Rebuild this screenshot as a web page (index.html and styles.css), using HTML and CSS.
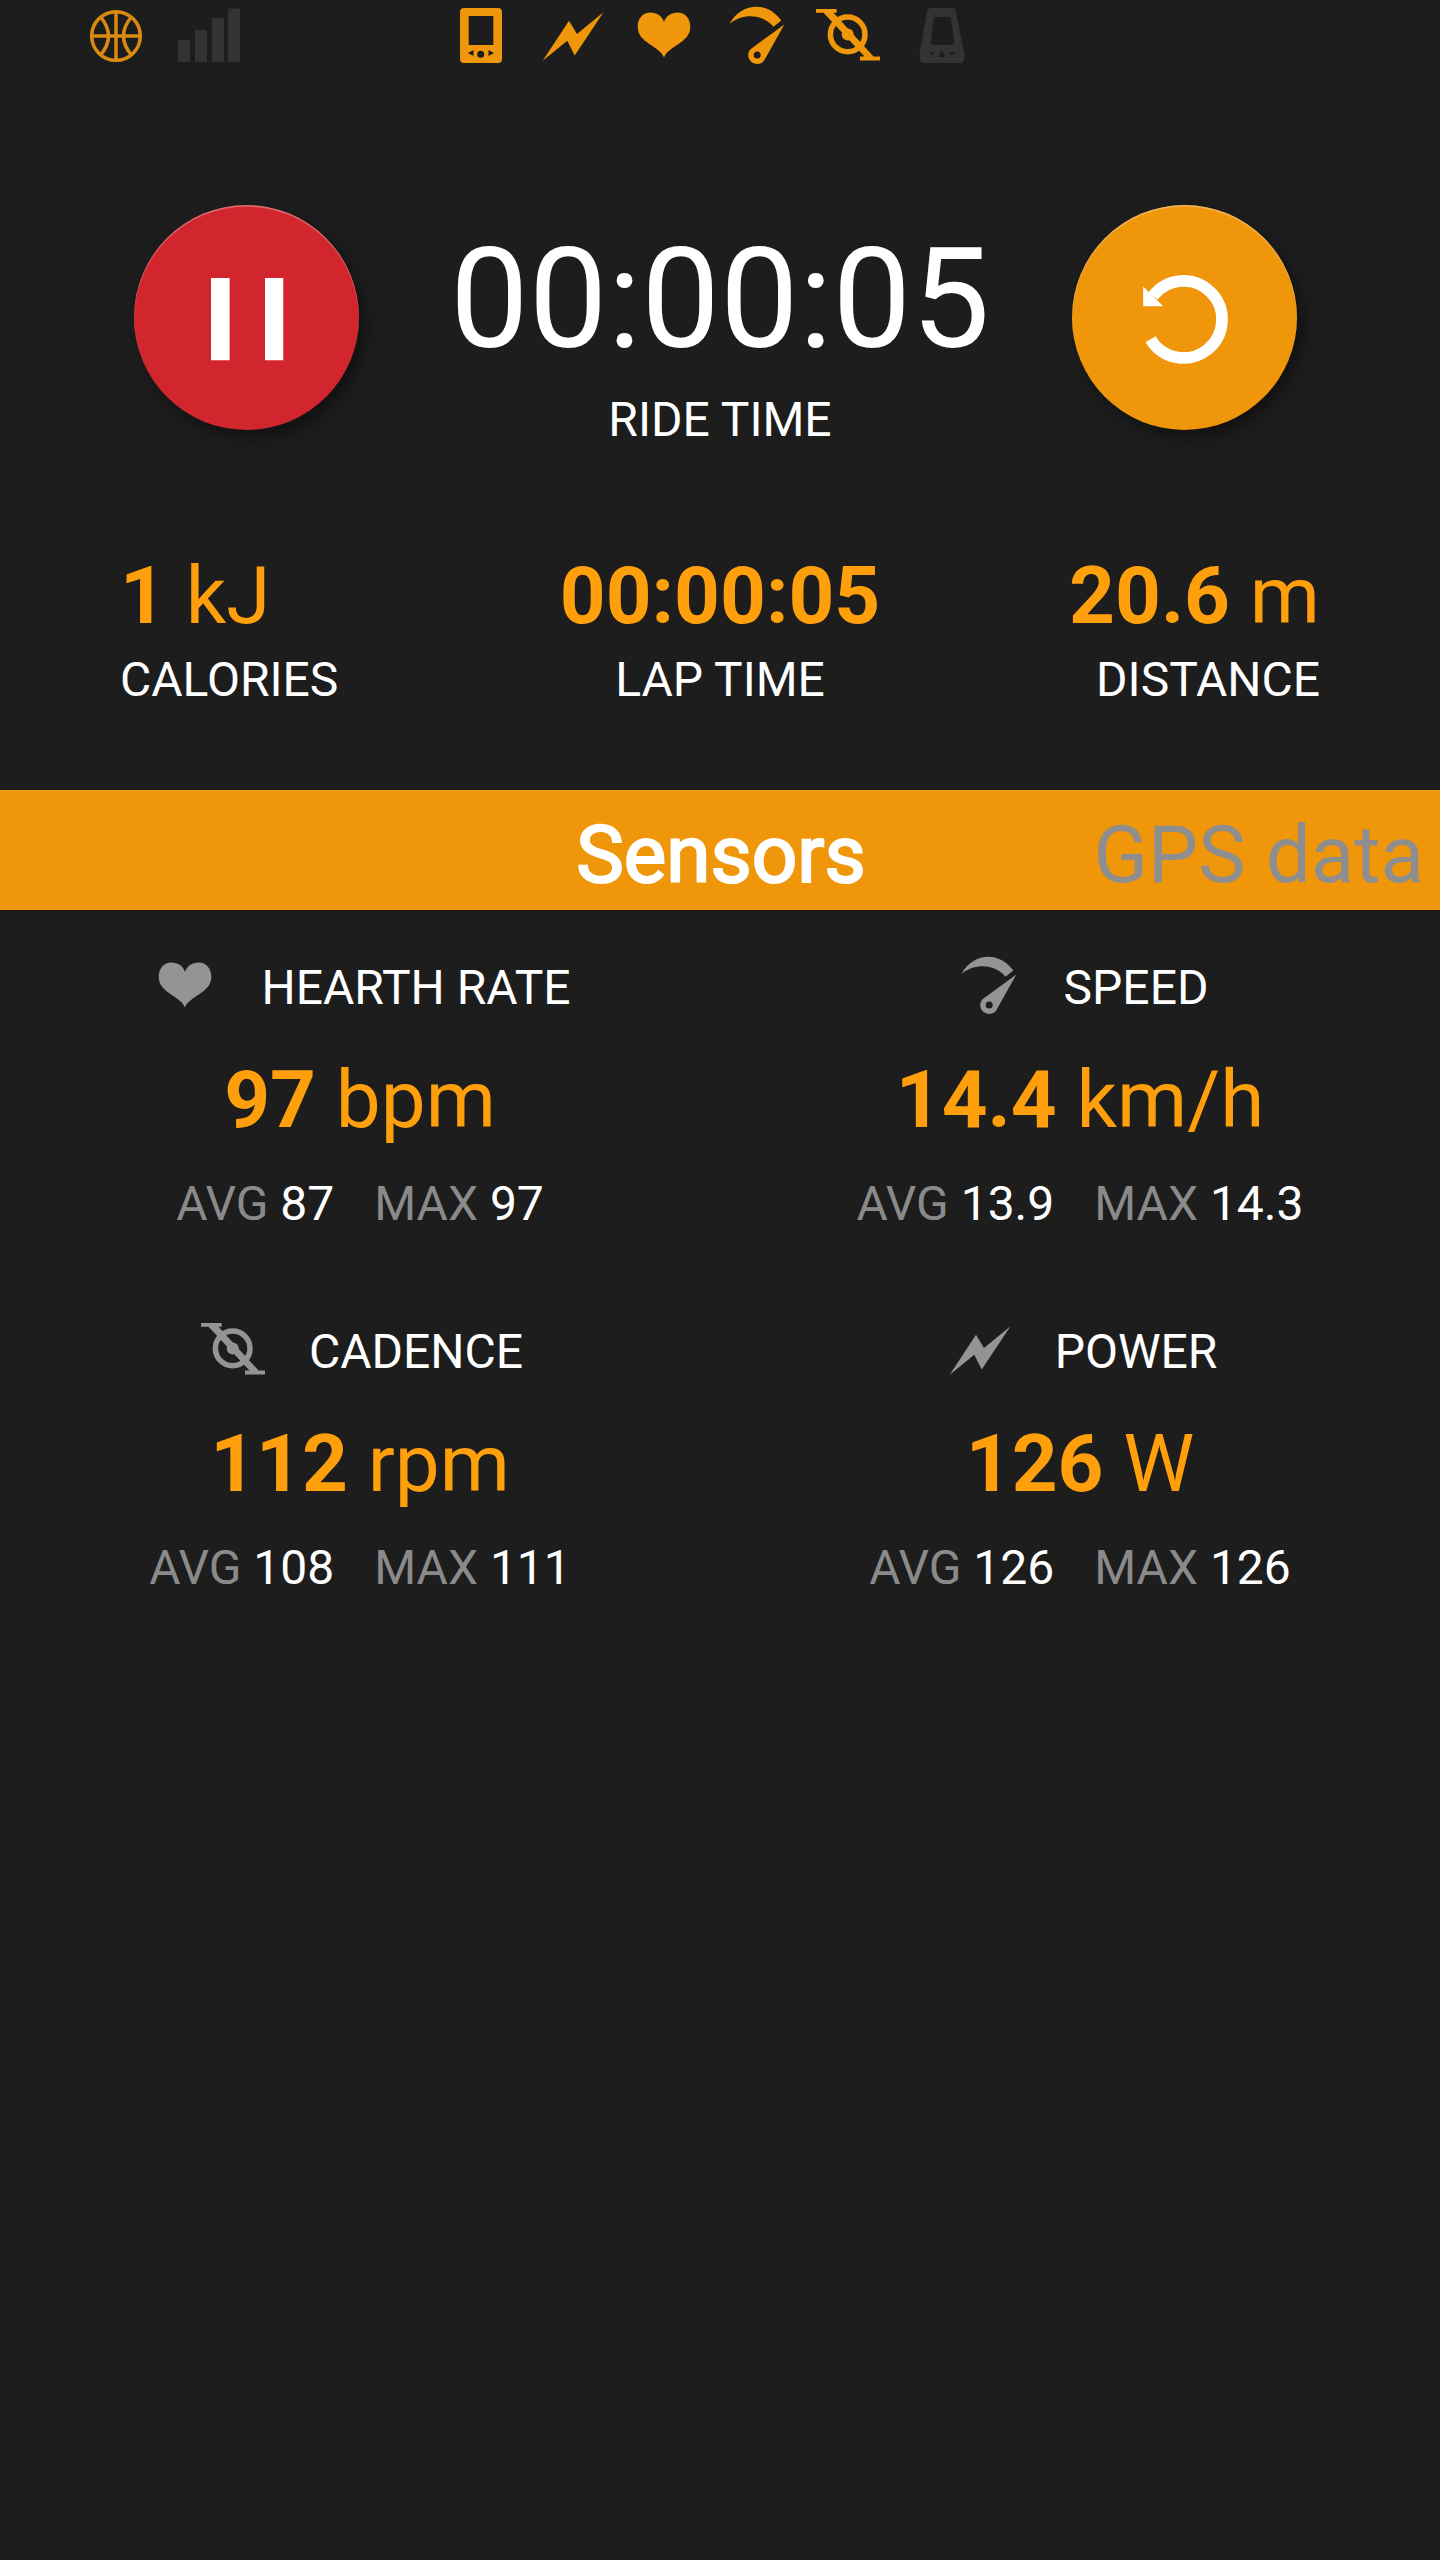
FILE: index.html
```html
<!DOCTYPE html>
<html lang="en">
<head>
    <meta charset="UTF-8">
    <meta name="viewport" content="width=device-width, initial-scale=1.0">
    <title>Ride</title>
    <link rel="stylesheet" href="styles.css">
</head>
<body>
    <!-- shared icons -->
    <svg class="defs" width="0" height="0">
        <symbol id="bolt" viewBox="0 0 72 72">
            <path d="M6.7 60.7L33 20.7L41 34L67.5 12.3L38.7 55.5L31.3 40.7Z"/>
        </symbol>
        <symbol id="heart" viewBox="0 0 72 72">
            <path d="M36 57.5C32 46 9.7 43 9.7 27C9.7 18 15 12.5 22.5 12.5C29 12.5 34 16 36 22C38 16 43 12.5 49.5 12.5C57 12.5 62.3 18 62.3 27C62.3 43 40 46 36 57.5Z"/>
        </symbol>
        <symbol id="speed" viewBox="0 0 72 72">
            <path d="M9.5 24C16 12 26 6.7 36.5 6.7C46.5 6.7 55 12 61.3 20.5L53.5 26.8C44 15 24 12 9.5 24Z"/>
            <path fill-rule="evenodd" d="M64.3 24.5L45 59C42 66 31 65.5 28.6 57.5C27.5 53.5 29 50.5 31.5 48.5ZM37.2 51.6A3.5 3.5 0 1 0 37.2 58.6A3.5 3.5 0 1 0 37.2 51.6Z"/>
        </symbol>
        <symbol id="cadence" viewBox="0 0 72 72">
            <path d="M4 9H24.7V12.8H21.5L61.5 56.5H68V60.6H48V56.5H52.5L11.500 12.8H4Z"/>
            <circle cx="35.7" cy="34.4" r="17.3" fill="none" stroke="currentColor" stroke-width="5.5"/>
            <circle cx="35.7" cy="34.4" r="6"/>
        </symbol>
    </svg>

    <div class="status-bar">
        <div class="status-left">
            <svg class="icon ball" viewBox="0 0 72 72">
                <circle cx="36" cy="36" r="24.3"/>
                <path d="M36 11V61M11 36H61M21 17.5Q36 36 21 54.5M51 17.5Q36 36 51 54.5"/>
            </svg>
            <svg class="icon off" viewBox="0 0 72 72">
                <path d="M6 40H18V62H6ZM23 30H35V62H23ZM40 18H52V62H40ZM56 8.5H68V62H56Z"/>
            </svg>
        </div>
        <div class="status-center">
            <svg class="icon" viewBox="0 0 72 72">
                <path fill-rule="evenodd" d="M20 8H54Q58 8 58 12V59Q58 63 54 63H20Q16 63 16 59V12Q16 8 20 8ZM24.7 16V45H49.3V16ZM24 53L29.5 50V56ZM36.7 50.8A3.5 3.5 0 1 0 36.7 57.8A3.5 3.5 0 1 0 36.7 50.8ZM50 53L44.5 50V56Z"/>
            </svg>
            <svg class="icon"><use href="#bolt"/></svg>
            <svg class="icon"><use href="#heart"/></svg>
            <svg class="icon"><use href="#speed"/></svg>
            <svg class="icon"><use href="#cadence"/></svg>
            <svg class="icon off" viewBox="0 0 72 72">
                <path fill-rule="evenodd" d="M27 8H48Q51 8 52 12L60.3 54Q61 63 56 63H20Q15 63 15.5 54L23 12Q24 8 27 8ZM32 17Q30 17 29.7 19L27 42Q27 45 30 45H47.5Q50.5 45 50.3 42L47 19Q46.7 17 45 17ZM25.5 52L31 52L28.5 56ZM37.7 50L41 57H34.5ZM45.5 52L51 52L47.5 56Z"/>
            </svg>
        </div>
    </div>

    <div class="ride">
        <div class="ride-side">
            <button class="round pause">
                <svg viewBox="0 0 225 225">
                    <path fill="#fff" d="M77 73H95.6V155.2H77ZM131 73H149.3V155.2H131Z"/>
                </svg>
            </button>
        </div>
        <div class="ride-time">
            <div class="time">00:00:05</div>
            <div class="label">RIDE TIME</div>
        </div>
        <div class="ride-side">
            <button class="round lap">
                <svg viewBox="0 0 225 225">
                    <path fill="none" stroke="#fff" stroke-width="11.6" d="M78.5 134.2A38.5 38.5 0 1 0 81 91"/>
                    <path fill="#fff" d="M71.2 81.5V101.3H91.2Z"/>
                </svg>
            </button>
        </div>
    </div>

    <div class="totals">
        <div class="total left">
            <div class="value"><b>1</b> kJ</div>
            <div class="label">CALORIES</div>
        </div>
        <div class="total">
            <div class="value"><b>00:00:05</b></div>
            <div class="label">LAP TIME</div>
        </div>
        <div class="total right">
            <div class="value"><b>20.6</b> m</div>
            <div class="label">DISTANCE</div>
        </div>
    </div>

    <div class="tabs">
        <div class="tab"></div>
        <div class="tab active">Sensors</div>
        <div class="tab next">GPS data</div>
    </div>

    <div class="sensors">
        <div class="sensor">
            <div class="sensor-title"><svg class="icon"><use href="#heart"/></svg><span>HEARTH RATE</span></div>
            <div class="value"><b>97</b> bpm</div>
            <div class="stats"><span>AVG <i>87</i></span><span>MAX <i>97</i></span></div>
        </div>
        <div class="sensor">
            <div class="sensor-title"><svg class="icon"><use href="#speed"/></svg><span>SPEED</span></div>
            <div class="value"><b>14.4</b> km/h</div>
            <div class="stats"><span>AVG <i>13.9</i></span><span>MAX <i>14.3</i></span></div>
        </div>
        <div class="sensor">
            <div class="sensor-title"><svg class="icon"><use href="#cadence"/></svg><span>CADENCE</span></div>
            <div class="value"><b>112</b> rpm</div>
            <div class="stats"><span>AVG <i>108</i></span><span>MAX <i>111</i></span></div>
        </div>
        <div class="sensor">
            <div class="sensor-title"><svg class="icon"><use href="#bolt"/></svg><span>POWER</span></div>
            <div class="value"><b>126</b> W</div>
            <div class="stats"><span>AVG <i>126</i></span><span>MAX <i>126</i></span></div>
        </div>
    </div>
</body>
</html>
```

FILE: styles.css
```css
* {
    box-sizing: border-box;
}
body {
    margin: 0;
    min-height: 100vh;
    background-color: #1d1d1d;
    color: #fff;
    font-family: Roboto, "Liberation Sans", sans-serif;
    font-size: 48px;
    line-height: 56px;
    overflow-x: hidden;
}
.defs {
    display: block;
}
.icon {
    display: block;
    flex: none;
    width: 72px;
    height: 72px;
    color: #ef960b;
    fill: currentColor;
}
.icon.off {
    color: #333;
}
.icon.ball {
    fill: none;
    stroke: #d98a10;
    stroke-width: 3.5;
}

/* status icons */
.status-bar {
    display: grid;
    grid-template-columns: 444px 552px 1fr;
    height: 72px;
}
.status-left,
.status-center {
    display: flex;
    gap: 20px;
}
.status-left {
    padding-left: 80px;
}

/* ride time and buttons */
.ride {
    display: flex;
    justify-content: space-between;
    padding: 133px 120px 0;
    height: 477px;
}
.ride-side {
    width: 255px;
}
.ride-time {
    padding-top: 12px;
    text-align: center;
}
.time {
    font-size: 140px;
    line-height: 164px;
    margin-bottom: 11px;
}
.round {
    display: block;
    width: 225px;
    height: 225px;
    padding: 0;
    border: none;
    border-radius: 50%;
    box-shadow: 6px 8px 16px rgba(0, 0, 0, 0.4), inset 0 1.5px 1px rgba(255, 255, 255, 0.35);
}
.round svg {
    display: block;
}
.pause {
    margin-left: 14px;
    background-color: #d1262e;
}
.lap {
    margin-left: 7px;
    background-color: #ef960b;
}

/* totals */
.totals {
    display: grid;
    grid-template-columns: 1fr 1fr 1fr;
    padding: 0 120px;
    height: 241px;
    text-align: center;
}
.total.left {
    text-align: left;
}
.total.right {
    text-align: right;
}
.value {
    color: #ff9f0c;
    font-size: 80px;
    line-height: 94px;
}
.total .value {
    margin-bottom: 9px;
}

/* tabs */
.tabs {
    display: grid;
    grid-template-columns: 1fr 1fr 1fr;
    height: 120px;
    padding-top: 18px;
    background-color: #ef960b;
    font-size: 80px;
    line-height: 94px;
}
.tab {
    text-align: center;
    white-space: nowrap;
}
.tab.active {
    padding-left: 2px;
    -webkit-text-stroke: 2.2px #fff;
}
.tab.next {
    padding-right: 16px;
    color: #8e8e8e;
    text-align: right;
}

/* sensors */
.sensors {
    display: grid;
    grid-template-columns: 1fr 1fr;
    row-gap: 82px;
    padding-top: 40px;
}
.sensor {
    text-align: center;
}
.sensor-title {
    display: flex;
    justify-content: center;
    gap: 40px;
    height: 76px;
    margin-bottom: 27px;
    line-height: 76px;
}
.sensor-title .icon {
    color: #949494;
}
.stats {
    display: flex;
    justify-content: center;
    gap: 40px;
    margin-top: 29px;
    color: #8a8a8a;
}
.stats i {
    color: #fff;
    font-style: normal;
}
```
